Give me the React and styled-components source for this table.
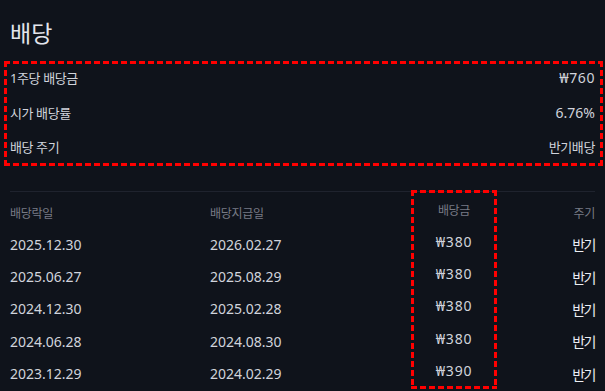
import styled, { createGlobalStyle } from 'styled-components';

const GlobalStyle = createGlobalStyle`
  html, body {
    margin: 0;
    padding: 0;
    background: #0f131b;
  }
  body {
    font-family: "Noto Sans", "Noto Sans CJK KR", sans-serif;
    color: #d1d4dc;
    overflow: hidden;
  }
`;

const dashes = (dir) =>
  `repeating-linear-gradient(${dir}, #ff0000 0 6px, transparent 6px 9px)`;

const Frame = styled.div`
  box-sizing: border-box;
  background:
    ${dashes('90deg')} top left / 100% 3px no-repeat,
    ${dashes('90deg')} bottom left / 100% 3px no-repeat,
    ${dashes('180deg')} top left / 3px 100% no-repeat,
    ${dashes('180deg')} top right / 3px 100% no-repeat;
`;

const Page = styled.div`
  width: 605px;
  height: 391px;
  box-sizing: border-box;
  padding: 18px 10px 0;
`;

const Title = styled.h2`
  margin: 0;
  font-size: 23px;
  line-height: 30px;
  font-weight: 400;
  color: #e3e5ec;
`;

const Summary = styled(Frame)`
  margin: 13px -8px 0 -6px;
  height: 105px;
  padding: 3px 8px 3px 6px;
  display: flex;
  flex-direction: column;
  gap: 7.5px;
`;

const SummaryRow = styled.div`
  height: 27px;
  display: flex;
  align-items: center;
  justify-content: space-between;
`;

const Label = styled.span`
  font-size: 13px;
  letter-spacing: -0.4px;
  color: #d1d4dc;
`;

const Value = styled.span`
  font-size: ${({ $hangul }) => ($hangul ? '13px' : '14px')};
  letter-spacing: ${({ $hangul, $spaced }) =>
    $hangul ? '-0.4px' : $spaced ? '0.6px' : '0'};
  color: #d1d4dc;
`;

const Divider = styled.div`
  margin-top: 25px;
  height: 1px;
  background: #1f232e;
`;

const Table = styled.div`
  display: flex;
`;

const Column = styled.div`
  width: ${({ $w }) => $w};
  flex: ${({ $grow }) => ($grow ? 1 : 'none')};
  padding-top: 6px;
  display: flex;
  flex-direction: column;
  align-items: ${({ $align }) => $align || 'flex-start'};
`;

const HighlightColumn = styled(Frame)`
  width: 86px;
  height: 199px;
  margin-top: -2px;
  padding-top: 5px;
  display: flex;
  flex-direction: column;
  align-items: center;
`;

const HeadCell = styled.div`
  height: 30px;
  display: flex;
  align-items: center;
  font-size: 12px;
  letter-spacing: -0.3px;
  color: #787b86;
`;

const Cell = styled.div`
  height: 32.4px;
  flex: none;
  display: flex;
  align-items: center;
  font-size: 14px;
  letter-spacing: ${({ $spacing }) => $spacing || '0'};
  color: ${({ $bright }) => ($bright ? '#eceef3' : '#d1d4dc')};
`;

const summary = [
  { label: '1주당 배당금', value: '₩760', spaced: true },
  { label: '시가 배당률', value: '6.76%' },
  { label: '배당 주기', value: '반기배당', hangul: true },
];

const rows = [
  { ex: '2025.12.30', pay: '2026.02.27', amount: '₩380', cycle: '반기' },
  { ex: '2025.06.27', pay: '2025.08.29', amount: '₩380', cycle: '반기' },
  { ex: '2024.12.30', pay: '2025.02.28', amount: '₩380', cycle: '반기' },
  { ex: '2024.06.28', pay: '2024.08.30', amount: '₩380', cycle: '반기' },
  { ex: '2023.12.29', pay: '2024.02.29', amount: '₩390', cycle: '반기' },
];

export default function App() {
  return (
    <Page>
      <GlobalStyle />
      <Title>배당</Title>
      <Summary>
        {summary.map((s) => (
          <SummaryRow key={s.label}>
            <Label>{s.label}</Label>
            <Value $hangul={s.hangul} $spaced={s.spaced}>
              {s.value}
            </Value>
          </SummaryRow>
        ))}
      </Summary>
      <Divider />
      <Table>
        <Column $w="200px">
          <HeadCell>배당락일</HeadCell>
          {rows.map((r) => (
            <Cell key={r.ex}>{r.ex}</Cell>
          ))}
        </Column>
        <Column $w="201px">
          <HeadCell>배당지급일</HeadCell>
          {rows.map((r) => (
            <Cell key={r.pay}>{r.pay}</Cell>
          ))}
        </Column>
        <HighlightColumn>
          <HeadCell>배당금</HeadCell>
          {rows.map((r, i) => (
            <Cell key={i} $spacing="0.8px">
              {r.amount}
            </Cell>
          ))}
        </HighlightColumn>
        <Column $grow $align="flex-end">
          <HeadCell>주기</HeadCell>
          {rows.map((r, i) => (
            <Cell key={i} $spacing="-1.5px" $bright>
              {r.cycle}
            </Cell>
          ))}
        </Column>
      </Table>
    </Page>
  );
}
